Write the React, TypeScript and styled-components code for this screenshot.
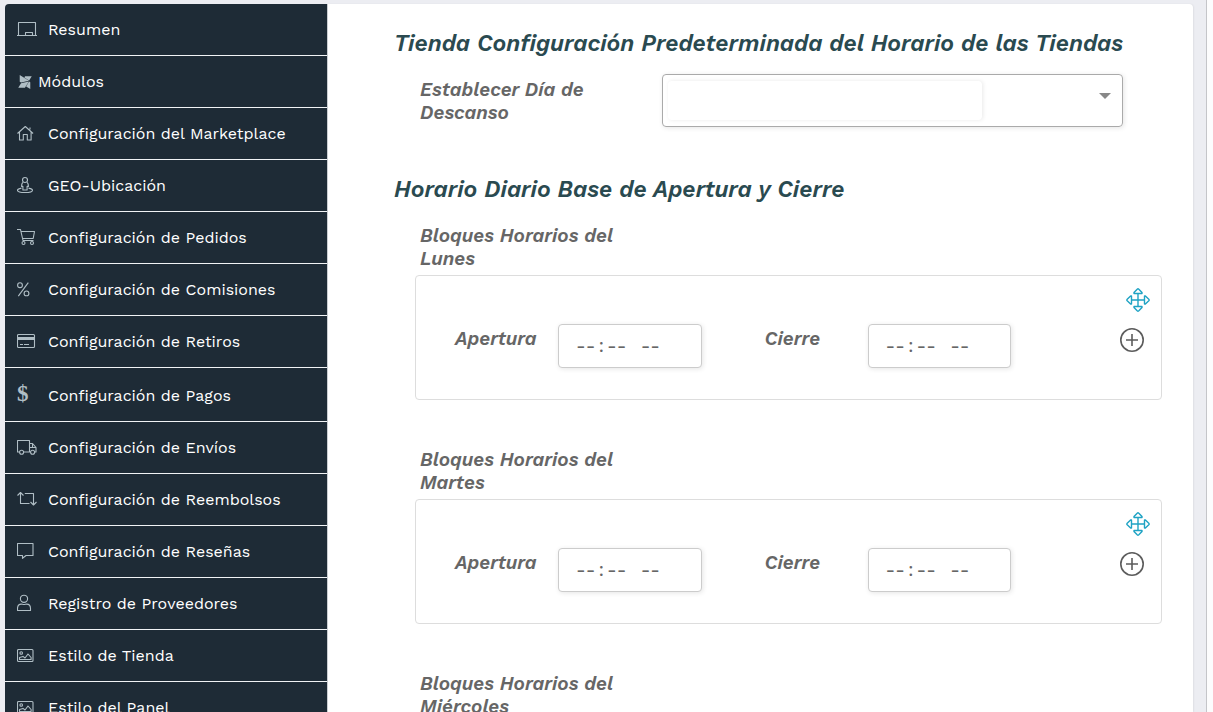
import React from "react";
import styled, { createGlobalStyle } from "styled-components";
import { FaModx } from "react-icons/fa";

const GlobalStyle = createGlobalStyle`
  *, *::before, *::after { box-sizing: border-box; }
  body {
    margin: 0;
    background: #fcfcfd;
    font-family: "Work Sans", Inter, "Liberation Sans", sans-serif;
    font-size: 16px;
    color: #666;
  }
`;

const Page = styled.div`
  display: flex;
  height: 100vh;
  overflow: hidden;
  margin-right: 6px;
  padding: 4px 13px 0 5px;
  background: #ecedf2;
  border-right: 1px solid #c4c5c9;
`;

const Sidebar = styled.nav`
  flex: 0 0 323px;
  background: #1e2b36;
  border-right: 1px solid #c9cdd1;
  border-top-left-radius: 4px;
  overflow: hidden;
`;

const MenuLink = styled.a<{ $tall?: boolean; $compact?: boolean }>`
  display: flex;
  align-items: center;
  gap: ${(p) => (p.$compact ? 5 : 11)}px;
  height: ${(p) => (p.$tall ? 54 : 52)}px;
  padding: ${(p) => (p.$tall ? 2 : 0)}px 0 0 12px;
  border-bottom: 1px solid #f1f3f5;
  color: #fff;
  text-decoration: none;
  white-space: nowrap;
`;

const MenuIcon = styled.span<{ $compact?: boolean }>`
  display: flex;
  flex: 0 0 ${(p) => (p.$compact ? 14 : 20)}px;
  justify-content: ${(p) => (p.$compact ? "center" : "flex-start")};
  color: #b0bec5;

  svg { flex: none; }
`;

const Dollar = styled.span`
  padding-bottom: 4px;
  font: bold 23px/24px "Liberation Serif", serif;
`;

const Panel = styled.main`
  flex: 1;
  min-width: 0;
  padding: 24px 31px 0 66px;
  background: #fff;
  border-top-right-radius: 4px;
  box-shadow: 1px 0 2px rgba(0, 0, 0, 0.06);
  overflow: hidden;
`;

const Heading = styled.h2`
  margin: 0;
  font-size: 23px;
  line-height: 32px;
  font-weight: 600;
  font-style: italic;
  color: #2a4a50;
  white-space: nowrap;
`;

const FieldRow = styled.div`
  display: flex;
  align-items: flex-start;
  padding: 14px 39px 47px 26px;
`;

const labelText = `
  font-size: 19px;
  line-height: 23px;
  font-weight: 600;
  font-style: italic;
  color: #666;
`;

const FieldLabel = styled.label`
  ${labelText}
  flex: 0 0 242px;
  padding: 4px 50px 0 0;
`;

const Combo = styled.div`
  position: relative;
  display: flex;
  flex: 1;
  height: 53px;
  padding: 6px 5px;
  border: 1px solid #aaa;
  border-radius: 4px;
  box-shadow: 1px 1px 5px rgba(0, 0, 0, 0.1);
  overflow: hidden;

  &::after {
    content: "";
    position: absolute;
    top: 18px;
    right: 11px;
    border: 6px solid transparent;
    border-top-color: #888;
    border-bottom: 0;
    pointer-events: none;
  }
`;

const ComboSearch = styled.input`
  flex: 0 1 314px;
  min-width: 0;
  padding: 0 10px;
  border: 0;
  border-radius: 4px;
  outline: 0;
  background: #fff;
  box-shadow: 1px 0 4px rgba(0, 0, 0, 0.09);
`;

const ComboSelect = styled.select`
  flex: 1;
  min-width: 0;
  border: 0;
  background: transparent;
  appearance: none;
`;

const Day = styled.fieldset`
  margin: 0 0 48px 21px;
  padding: 0;
  border: 0;
  min-width: 0;
`;

const DayList = styled.div`
  padding-top: 18px;
`;

const DayLabel = styled.legend`
  ${labelText}
  width: 220px;
  height: 51px;
  padding: 0 0 0 5px;
`;

const DayBox = styled.div`
  display: flex;
  align-items: flex-start;
  border: 1px solid #ddd;
  border-radius: 4px;
`;

const Slots = styled.div`
  display: flex;
  flex: 1;
  gap: 63px;
  padding: 48px 0 31px 39px;
`;

const Slot = styled.label`
  ${labelText}
  display: flex;
  flex: 1;
  align-items: flex-start;
  min-width: 0;
`;

const SlotName = styled.span`
  flex: 0 0 103px;
  padding-top: 3px;
`;

const TimeInput = styled.input`
  flex: 1;
  min-width: 0;
  height: 44px;
  padding: 0 0 2px 16px;
  border: 1px solid #ccc;
  border-radius: 4px;
  background: #fff;
  box-shadow: 1px 1px 5px rgba(0, 0, 0, 0.1);
  font-family: "Work Sans", Inter, "Liberation Sans", sans-serif;
  font-size: 19px;
  color: #666;

  &::-webkit-datetime-edit-text { padding: 0 2px; }
  &::-webkit-datetime-edit-ampm-field { padding-left: 6px; }
  &::-webkit-calendar-picker-indicator { display: none; }
`;

const Actions = styled.div`
  display: flex;
  flex: 0 0 150px;
  flex-direction: column;
  align-items: flex-end;
  gap: 16px;
  padding: 12px 11px 0 0;
`;

const IconButton = styled.button<{ $tone: string; $inset?: boolean }>`
  display: flex;
  margin: 0 ${(p) => (p.$inset ? 6 : 0)}px 0 0;
  padding: 0;
  border: 0;
  background: none;
  color: ${(p) => p.$tone};
`;

const Line = ({ children, w = 20 }: { children: React.ReactNode; w?: number }) => (
  <svg width={w} height="20" viewBox={`0 0 ${w} 20`} fill="none" stroke="currentColor" strokeWidth="1.1" strokeLinejoin="round" aria-hidden="true">
    {children}
  </svg>
);

const PictureIcon = () => (
  <Line>
    <rect x=".5" y="3.5" width="15.5" height="12" rx="1" />
    <circle cx="4.2" cy="7" r="1.3" />
    <path d="M2.5 11.5v2h11.6v-2L11 8l-3 4-2-1.6z" />
  </Line>
);

type Item = { text: string; icon: React.ReactNode; tall?: boolean; compact?: boolean };

const items: Item[] = [
  { text: "Resumen", icon: <Line><path d="M0 15.5h20M1.5 15.5v-13h17v13M8.5 15.5v-3h7v3" /></Line> },
  { text: "Módulos", icon: <FaModx size={16} />, compact: true },
  { text: "Configuración del Marketplace", icon: <Line><path d="M.5 9.5 8.3 2.5l7.8 7M2.5 8v8h3.8v-5.5h4V16h3.8V8M13 5.5V3.5" /></Line> },
  { text: "GEO-Ubicación", icon: <Line><circle cx="8" cy="4" r="2.5" /><path d="M6 6.4c-1.3.6-1.4 1.5-1.4 4h1.3v3.6h4.2v-3.6h1.3c0-2.5-.1-3.4-1.4-4M4.5 12.1C1.8 12.6.5 13.2.5 14.2c0 1.4 3.3 2.3 7.5 2.3s7.5-.9 7.5-2.3c0-1-1.3-1.6-4-2.1" /></Line> },
  { text: "Configuración de Pedidos", icon: <Line><path d="M0 1.5h3.5l2.5 11h10.5M4 3.5h13.5l-1.3 7H5.6" /><circle cx="6.5" cy="15" r="1.5" /><circle cx="15" cy="15" r="1.5" /></Line> },
  { text: "Configuración de Comisiones", icon: <Line><circle cx="3" cy="5.2" r="2.4" /><circle cx="9.5" cy="13.4" r="2.4" /><path d="M11.3 2.7 1.3 16.1" /></Line> },
  { text: "Configuración de Retiros", icon: <Line><rect x=".5" y="2.5" width="17" height="13" rx="1" /><path d="M.5 6.5h17" strokeWidth="3" /><path d="M3 12.5h3M7 12.5h5" /></Line> },
  { text: "Configuración de Pagos", icon: <Dollar aria-hidden="true">$</Dollar>, tall: true },
  { text: "Configuración de Envíos", icon: <Line><path d="M2.6 14H.5V2.5h12V14H6.6M12.5 5.5h3l3.5 4V14h-1.4M12.5 14h1.2M12.5 9.5H19M15.5 5.5v4" /><circle cx="4.6" cy="14.3" r="2" /><circle cx="15.6" cy="14.3" r="2" /></Line> },
  { text: "Configuración de Reembolsos", icon: <Line><path d="M.5 5.5 3.5 2.5l3 3M3.5 2.5v11h9M7.8 3.5h8.7V15M13.5 12l3 3 3-3" /></Line> },
  { text: "Configuración de Reseñas", icon: <Line><path d="M.5 1.5h15.5v12H9l-3.5 2.8v-2.8h-5z" /></Line> },
  { text: "Registro de Proveedores", icon: <Line><circle cx="7" cy="4.8" r="3.6" /><path d="M.5 16.5v-2c0-3 1.8-4.4 3.8-4.4 1 0 1.4.4 2.7.4s1.7-.4 2.7-.4c2 0 3.8 1.4 3.8 4.4v2z" /></Line> },
  { text: "Estilo de Tienda", icon: <PictureIcon /> },
  { text: "Estilo del Panel", icon: <PictureIcon /> },
];

const MoveIcon = () => (
  <svg width="24" height="24" viewBox="0 0 24 24" fill="none" stroke="currentColor" strokeWidth="1.4" strokeLinejoin="round" aria-hidden="true">
    <path d="M12 5.5v13M5.5 12h13M8 5.5 8 4.6 11.2 1.2q.8-.7 1.6 0L16 4.6v.9zM8 18.5v.9l3.2 3.4q.8.7 1.6 0L16 19.4v-.9zM5.5 8h-.9L1.2 11.2q-.7.8 0 1.6L4.6 16h.9zM18.5 8h.9l3.4 3.2q.7.8 0 1.6L19.4 16h-.9z" />
  </svg>
);

const PlusIcon = () => (
  <svg width="24" height="24" viewBox="0 0 24 24" fill="none" stroke="currentColor" strokeWidth="1.6" aria-hidden="true">
    <circle cx="12" cy="12" r="11.2" />
    <path d="M12 6v12M6 12h12" />
  </svg>
);

const days = ["Lunes", "Martes", "Miércoles"];

export default function App() {
  return (
    <Page>
      <GlobalStyle />
      <Sidebar>
        {items.map((it) => (
          <MenuLink key={it.text} href="#" $tall={it.tall} $compact={it.compact}>
            <MenuIcon $compact={it.compact}>{it.icon}</MenuIcon>
            {it.text}
          </MenuLink>
        ))}
      </Sidebar>
      <Panel>
        <Heading>Tienda Configuración Predeterminada del Horario de las Tiendas</Heading>
        <FieldRow>
          <FieldLabel htmlFor="rest-day">Establecer Día de Descanso</FieldLabel>
          <Combo>
            <ComboSearch type="text" aria-label="Buscar día" />
            <ComboSelect id="rest-day" defaultValue="">
              <option value="" />
            </ComboSelect>
          </Combo>
        </FieldRow>
        <Heading>Horario Diario Base de Apertura y Cierre</Heading>
        <DayList>
          {days.map((day) => (
            <Day key={day}>
              <DayLabel>Bloques Horarios del {day}</DayLabel>
              <DayBox>
                <Slots>
                  <Slot>
                    <SlotName>Apertura</SlotName>
                    <TimeInput type="time" />
                  </Slot>
                  <Slot>
                    <SlotName>Cierre</SlotName>
                    <TimeInput type="time" />
                  </Slot>
                </Slots>
                <Actions>
                  <IconButton type="button" aria-label="Mover" $tone="#1fa3c4"><MoveIcon /></IconButton>
                  <IconButton type="button" aria-label="Agregar" $tone="#5c5c5c" $inset><PlusIcon /></IconButton>
                </Actions>
              </DayBox>
            </Day>
          ))}
        </DayList>
      </Panel>
    </Page>
  );
}
